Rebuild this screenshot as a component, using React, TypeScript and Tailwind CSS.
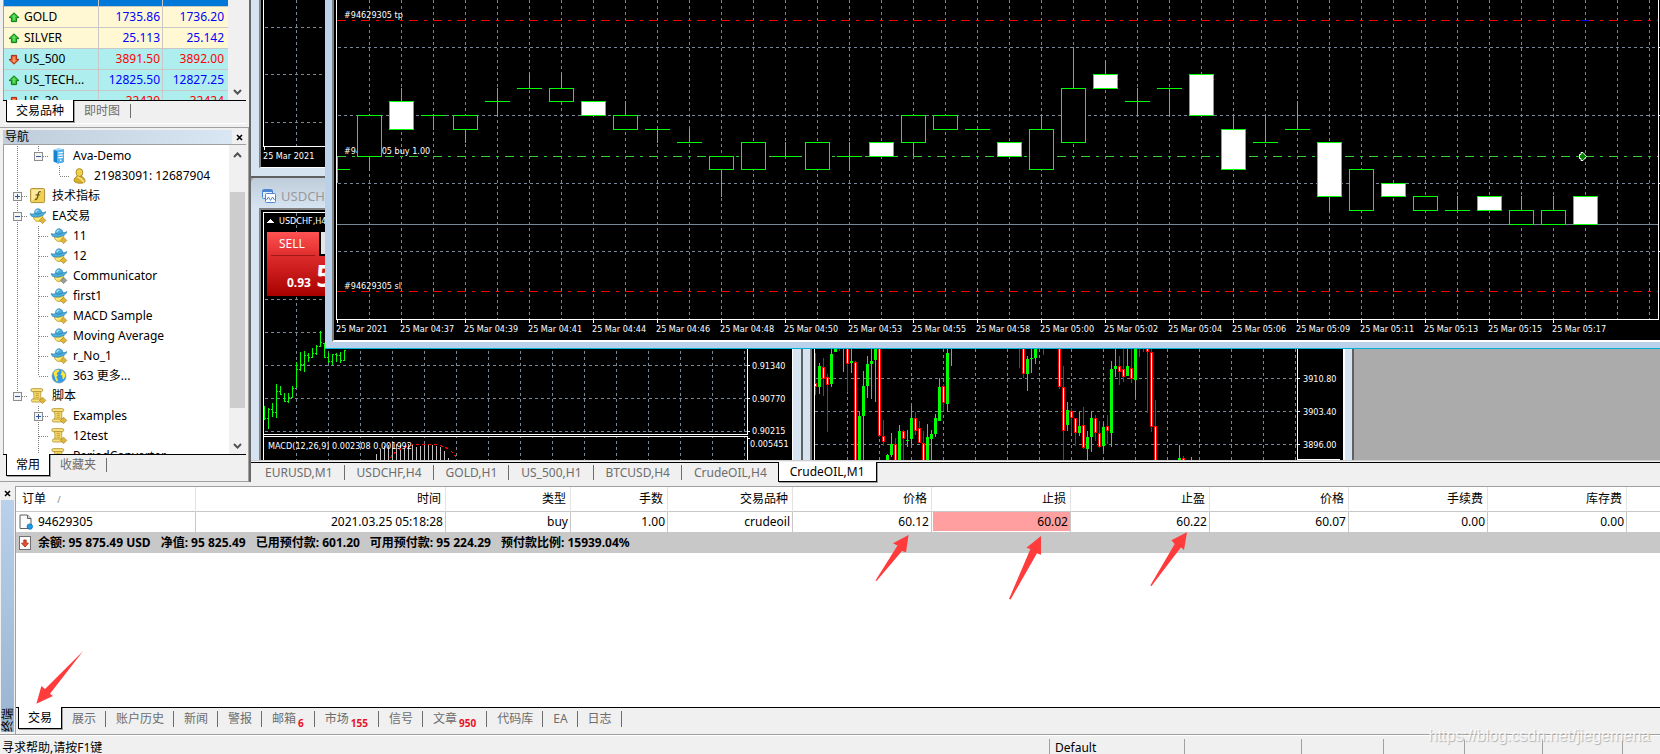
import React from 'react';

type Direction = 'up' | 'down';

const quotes: { symbol: string; bid: string; ask: string; dir: Direction; tone: string; color: string }[] = [
  { symbol: 'GOLD', bid: '1735.86', ask: '1736.20', dir: 'up', tone: 'bg-[#fff8d2]', color: 'text-[#0000ff]' },
  { symbol: 'SILVER', bid: '25.113', ask: '25.142', dir: 'up', tone: 'bg-[#fff8d2]', color: 'text-[#0000ff]' },
  { symbol: 'US_500', bid: '3891.50', ask: '3892.00', dir: 'down', tone: 'bg-[#afeeee]', color: 'text-[#ff0000]' },
  { symbol: 'US_TECH...', bid: '12825.50', ask: '12827.25', dir: 'up', tone: 'bg-[#afeeee]', color: 'text-[#0000ff]' },
  { symbol: 'US_30', bid: '32420', ask: '32424', dir: 'down', tone: 'bg-[#afeeee]', color: 'text-[#ff0000]' },
];

type Guide = 'line' | 'tee' | 'end' | 'blank' | 'open' | 'closed' | 'last-open';
type IconName = 'server' | 'user' | 'func' | 'robot' | 'robotGray' | 'globe' | 'script';

const tree: { label: string; icon: IconName; guides: Guide[] }[] = [
  { label: 'Ava-Demo', icon: 'server', guides: ['line', 'last-open'] },
  { label: '21983091: 12687904', icon: 'user', guides: ['line', 'blank', 'end'] },
  { label: '技术指标', icon: 'func', guides: ['closed'] },
  { label: 'EA交易', icon: 'robot', guides: ['open'] },
  { label: '11', icon: 'robot', guides: ['line', 'tee'] },
  { label: '12', icon: 'robot', guides: ['line', 'tee'] },
  { label: 'Communicator', icon: 'robotGray', guides: ['line', 'tee'] },
  { label: 'first1', icon: 'robot', guides: ['line', 'tee'] },
  { label: 'MACD Sample', icon: 'robot', guides: ['line', 'tee'] },
  { label: 'Moving Average', icon: 'robot', guides: ['line', 'tee'] },
  { label: 'r_No_1', icon: 'robot', guides: ['line', 'tee'] },
  { label: '363 更多...', icon: 'globe', guides: ['line', 'end'] },
  { label: '脚本', icon: 'script', guides: ['last-open'] },
  { label: 'Examples', icon: 'script', guides: ['blank', 'closed'] },
  { label: '12test', icon: 'script', guides: ['blank', 'tee'] },
  { label: 'PeriodConverter', icon: 'script', guides: ['blank', 'tee'] },
];

const chartTabs = ['EURUSD,M1', 'USDCHF,H4', 'GOLD,H1', 'US_500,H1', 'BTCUSD,H4', 'CrudeOIL,H4', 'CrudeOIL,M1'];

const terminalTabs: { label: string; badge?: string }[] = [
  { label: '交易' },
  { label: '展示' },
  { label: '账户历史' },
  { label: '新闻' },
  { label: '警报' },
  { label: '邮箱', badge: '6' },
  { label: '市场', badge: '155' },
  { label: '信号' },
  { label: '文章', badge: '950' },
  { label: '代码库' },
  { label: 'EA' },
  { label: '日志' },
];

const orderColumns = [
  { title: '时间', value: '2021.03.25 05:18:28', width: 'w-[250px]' },
  { title: '类型', value: 'buy', width: 'w-[125px]' },
  { title: '手数', value: '1.00', width: 'w-[97px]' },
  { title: '交易品种', value: 'crudeoil', width: 'w-[125px]' },
  { title: '价格', value: '60.12', width: 'w-[139px]' },
  { title: '止损', value: '60.02', width: 'w-[139px]', alert: true },
  { title: '止盈', value: '60.22', width: 'w-[139px]' },
  { title: '价格', value: '60.07', width: 'w-[139px]' },
  { title: '手续费', value: '0.00', width: 'w-[139px]' },
  { title: '库存费', value: '0.00', width: 'w-[139px]' },
];

// body top, body bottom, high, low, filled
type Candle = [number, number, number, number, boolean?];

const crudeCandles: Candle[] = [
  [115, 156, 115, 170],
  [101, 129, 88, 129, true],
  [115, 115, 115, 129],
  [115, 129, 115, 142],
  [101, 101, 88, 115],
  [88, 88, 74, 88],
  [88, 101, 74, 101],
  [101, 115, 101, 115, true],
  [115, 129, 101, 129],
  [129, 129, 129, 142],
  [142, 142, 129, 142],
  [156, 169, 156, 196],
  [142, 169, 142, 169],
  [156, 156, 142, 156],
  [142, 169, 142, 169],
  [156, 156, 142, 169],
  [142, 156, 142, 156, true],
  [115, 142, 115, 156],
  [115, 129, 115, 129],
  [129, 129, 129, 129],
  [142, 156, 142, 156, true],
  [129, 169, 115, 169],
  [88, 142, 47, 142],
  [74, 88, 61, 88, true],
  [101, 101, 88, 115],
  [88, 88, 88, 115],
  [74, 115, 74, 115, true],
  [129, 169, 115, 169, true],
  [142, 142, 115, 142],
  [129, 129, 101, 129],
  [142, 196, 142, 210, true],
  [169, 210, 169, 210],
  [183, 196, 183, 196, true],
  [196, 210, 196, 210],
  [210, 210, 196, 210],
  [196, 210, 196, 210, true],
  [210, 224, 196, 224],
  [210, 224, 196, 224],
  [196, 224, 196, 224, true],
];

const crudeTimes = [
  '25 Mar 2021', '25 Mar 04:37', '25 Mar 04:39', '25 Mar 04:41', '25 Mar 04:44', '25 Mar 04:46', '25 Mar 04:48',
  '25 Mar 04:50', '25 Mar 04:53', '25 Mar 04:55', '25 Mar 04:58', '25 Mar 05:00', '25 Mar 05:02', '25 Mar 05:04',
  '25 Mar 05:06', '25 Mar 05:09', '25 Mar 05:11', '25 Mar 05:13', '25 Mar 05:15', '25 Mar 05:17',
];

// slot, bullish, high, low, body top, body bottom
const us500Candles: [number, 0 | 1, number, number, number, number][] = [
  [0, 0, 353, 395, 383, 387], [1, 1, 363, 394, 366, 387], [2, 0, 358, 396, 367, 379], [3, 0, 374, 432, 377, 385],
  [4, 1, 345, 387, 354, 384], [5, 1, 345, 352, 345, 352], [6, 0, 345, 351, 345, 345], [7, 1, 345, 372, 345, 345],
  [8, 0, 345, 392, 345, 364], [9, 1, 345, 373, 361, 363], [10, 0, 361, 460, 362, 462], [11, 1, 412, 460, 416, 462],
  [12, 1, 371, 460, 386, 416], [13, 1, 356, 398, 364, 386], [14, 1, 345, 399, 361, 364], [15, 1, 345, 402, 345, 360],
  [16, 0, 345, 437, 345, 436], [17, 0, 420, 446, 436, 442], [18, 1, 454, 460, 455, 462], [19, 1, 433, 457, 444, 455],
  [20, 0, 438, 460, 444, 462], [21, 1, 425, 460, 431, 462], [22, 0, 430, 460, 431, 439], [23, 1, 430, 447, 440, 441],
  [24, 1, 406, 444, 418, 439], [25, 0, 412, 435, 418, 431], [26, 0, 421, 443, 428, 443], [27, 0, 431, 460, 443, 462],
  [28, 1, 424, 460, 437, 462], [29, 1, 430, 460, 434, 439], [30, 1, 414, 437, 418, 434], [31, 1, 378, 421, 387, 421],
  [32, 0, 384, 411, 386, 403], [33, 1, 345, 412, 353, 404], [34, 1, 345, 366, 345, 345], [51, 0, 345, 368, 345, 345],
  [52, 0, 345, 378, 345, 374], [53, 1, 356, 391, 359, 374], [54, 1, 345, 373, 358, 359], [55, 1, 345, 364, 345, 358],
  [57, 0, 345, 355, 345, 345], [61, 0, 345, 389, 345, 387], [62, 0, 366, 460, 387, 431], [63, 1, 402, 431, 410, 425],
  [64, 0, 408, 433, 411, 418], [65, 0, 418, 446, 418, 433], [66, 1, 411, 436, 426, 433], [67, 0, 407, 449, 425, 448],
  [68, 1, 431, 460, 437, 449], [69, 1, 411, 452, 418, 437], [70, 0, 415, 441, 418, 433], [71, 0, 421, 448, 433, 447],
  [72, 1, 423, 451, 427, 446], [73, 0, 415, 444, 426, 431], [74, 1, 361, 447, 369, 433], [75, 1, 345, 377, 366, 369],
  [76, 0, 356, 385, 366, 372], [77, 0, 345, 382, 369, 377], [78, 1, 345, 376, 366, 376], [79, 0, 345, 383, 368, 379],
  [80, 1, 345, 398, 345, 380], [81, 0, 345, 357, 345, 345], [82, 0, 345, 352, 345, 345], [83, 0, 345, 413, 345, 352],
  [84, 0, 345, 432, 352, 427], [85, 0, 400, 460, 426, 462], [91, 1, 445, 460, 458, 462], [92, 0, 456, 460, 458, 462],
  [94, 1, 457, 460, 460, 460],
];

// high, low, open, close
const usdchfBars: [number, number, number, number][] = [
  [406, 420, 418, 418], [408, 429, 418, 409], [403, 417, 409, 412], [384, 418, 412, 391], [386, 395, 391, 394],
  [393, 402, 398, 401], [393, 403, 401, 397], [386, 398, 397, 388], [362, 388, 388, 369], [352, 371, 369, 364],
  [351, 372, 364, 355], [353, 362, 355, 357], [348, 358, 357, 353], [345, 355, 353, 346], [331, 347, 346, 342],
  [343, 358, 343, 357], [353, 363, 357, 361], [354, 365, 361, 354], [353, 362, 354, 355], [352, 363, 355, 360],
  [350, 361, 360, 350],
];

const macdHeights = [6, 11, 14, 15, 16, 16, 15, 14, 16, 15, 13, 14, 15, 16, 15, 14, 13, 9, 2];

const QuoteArrow: React.FC<{ dir: Direction }> = ({ dir }) => (
  <svg viewBox="0 0 12 11" className={dir === 'up' ? 'h-[11px] w-3' : 'h-[11px] w-3 rotate-180'}>
    <path
      d="M6 0.8 L11 5.6 H8.6 V9.6 H3.4 V5.6 H1 Z"
      fill={dir === 'up' ? '#2fc12f' : '#f0602c'}
      stroke={dir === 'up' ? '#0d7a18' : '#a02a10'}
      strokeLinejoin="round"
    />
    <path d="M6 2.6 L8 4.8 H6.8 V8 H5.2 V4.8 H4 Z" fill={dir === 'up' ? '#6fdc6f' : '#ffa070'} />
  </svg>
);

const Diamond: React.FC<{ gray?: boolean }> = ({ gray }) => (
  <path d="M12.6 9.2 L15.8 12.4 L12.6 15.6 L9.4 12.4 Z" fill={gray ? '#9b9b9b' : '#dfb63a'} stroke={gray ? '#777777' : '#a8852a'} strokeWidth="0.7" />
);

const TreeIcon: React.FC<{ name: IconName }> = ({ name }) => (
  <svg viewBox="0 0 16 16" className="ml-[2px] h-4 w-4 shrink-0 overflow-visible">
    {name === 'server' && (
      <>
        <path d="M2.5 2 L7 0.5 L13 1.5 V14 L7 15.5 L2.5 13.5 Z" fill="#1583cf" />
        <path d="M6 2.6 L13 1.6 V14 L6 15.5 Z" fill="#4fb0ee" />
        <path d="M7.2 5 L11.8 4.3 M7.2 7.4 L11.8 6.8 M7.2 9.8 L11.8 9.3" stroke="#fff" strokeWidth="1.2" />
        <path d="M2.5 2 L7 0.3 L13 1.3 L6 2.8 Z" fill="#a6dcfa" />
        <circle cx="9.6" cy="12.4" r="0.8" fill="#fff" />
      </>
    )}
    {name === 'user' && (
      <>
        <path d="M2 13 C2 9.5 4.5 8 6.5 8 C10.5 8 13.2 10 13 14 C10 16 4 15.6 2 13 Z" fill="#d9b02a" stroke="#9c7a14" strokeWidth="0.8" />
        <ellipse cx="7.4" cy="4.6" rx="3.4" ry="4" fill="#efd24c" stroke="#9c7a14" strokeWidth="0.8" />
        <path d="M5.4 8.6 L9 11 L12.2 14.2" fill="none" stroke="#fae98e" strokeWidth="1.4" />
      </>
    )}
    {name === 'func' && (
      <>
        <rect x="0.6" y="0.6" width="14" height="14" rx="1.2" fill="#f0cf55" stroke="#b08f34" />
        <path d="M1.5 1.5 H13.6 L1.5 13.6 Z" fill="#fae99a" />
        <path d="M10.8 3.8 C9 3 8.4 4.5 8 7 C7.5 10 7 12 5 11.4 M5.6 6.8 H9.6" fill="none" stroke="#6b5212" strokeWidth="1.3" />
      </>
    )}
    {(name === 'robot' || name === 'robotGray') && (
      <>
        <path d="M3.2 7.5 C3.2 11.5 5.6 13.6 8.2 13.6 C11 13.6 12.8 11 12.8 7.5 Z" fill="#f6dc50" stroke="#b3942a" strokeWidth="0.7" />
        <path d="M0.3 5.6 C0 9 5.4 9.6 9 8.8 C12.4 8 15.6 6 15.7 3.6 C14.4 4.6 12.8 4.8 11.9 4.5 C11.2 1.6 9.4 0.6 7.6 0.8 C5.4 1 4.5 2.8 4.6 5.4 C3 6.2 1.4 6.2 0.3 5.6 Z" fill="#4aaede" stroke="#2a7dab" strokeWidth="0.7" />
        <path d="M4.6 5.4 C6.4 6.6 10.4 6.2 11.9 4.5" fill="none" stroke="#2a7dab" strokeWidth="0.8" />
        <path d="M5.9 4.2 C6 2.6 7 2 8.4 2" fill="none" stroke="#b5e4fa" strokeWidth="1.2" />
        <path d="M4.8 10.6 C7 11.4 9 11 10 10.2" fill="none" stroke="#fff3a8" />
        <Diamond gray={name === 'robotGray'} />
      </>
    )}
    {name === 'globe' && (
      <>
        <circle cx="8" cy="8" r="7" fill="#2f9be6" stroke="#7f9fb8" strokeWidth="0.8" />
        <path d="M2.4 5 C3.6 2.6 6 1.6 8.4 1.8 L7.6 4 L5.6 5 L6.8 7.4 L5.4 9 L7 12.2 L6.2 13.8 C4.6 12.6 4 10 3.6 8.4 Z" fill="#ffe536" />
        <path d="M10 2.4 C12.4 3 14.4 5.4 14.4 7.8 L12.6 11.6 L11.2 10 L11.4 7.8 L9.4 6.6 L10.8 4.6 Z" fill="#ffe536" />
      </>
    )}
    {name === 'script' && (
      <>
        <path d="M2.8 3.4 H11 C10.6 6 10.6 9 11.2 11.6 H3.4 C4.2 9 4.2 6 3 3.4 Z" fill="#f4d764" stroke="#b08f34" strokeWidth="0.8" />
        <rect x="0.8" y="0.6" width="12" height="3" rx="1.5" fill="#f8e07a" stroke="#b08f34" strokeWidth="0.8" />
        <rect x="1.4" y="11" width="11" height="3" rx="1.5" fill="#f8e07a" stroke="#b08f34" strokeWidth="0.8" />
        <path d="M5.6 5.6 H9 M5.8 7.4 H9 M5.6 9.2 H9" stroke="#b9962e" strokeWidth="0.7" />
        <Diamond />
      </>
    )}
  </svg>
);

const GuideCell: React.FC<{ kind: Guide }> = ({ kind }) => {
  const box = kind === 'open' || kind === 'closed' || kind === 'last-open';
  const toBottom = kind === 'line' || kind === 'tee' || kind === 'open' || kind === 'closed';
  return (
    <svg viewBox="0 0 21 20" className="h-5 w-[21px] shrink-0" shapeRendering="crispEdges">
      {kind !== 'blank' && (
        <path d={toBottom ? 'M10.5 0 V20' : 'M10.5 0 V10'} stroke="#808080" strokeDasharray="1 1" />
      )}
      {kind !== 'blank' && kind !== 'line' && <path d="M11 10.5 H21" stroke="#808080" strokeDasharray="1 1" />}
      {box && (
        <>
          <rect x="6.5" y="6.5" width="8" height="8" fill="#f4f4f4" stroke="#8c8c8c" />
          <path d={kind === 'closed' ? 'M8 10.5 H13 M10.5 8 V13' : 'M8 10.5 H13'} stroke="#31549c" />
        </>
      )}
    </svg>
  );
};

const Chevron: React.FC<{ up?: boolean }> = ({ up }) => (
  <svg viewBox="0 0 9 6" className="h-[6px] w-[9px]">
    <path d={up ? 'M1 5 L4.5 1.4 L8 5' : 'M1 1 L4.5 4.6 L8 1'} fill="none" stroke="#505050" strokeWidth="2" />
  </svg>
);

const CloseX = () => (
  <svg viewBox="0 0 7 7" className="h-[7px] w-[7px]">
    <path d="M1 1 L6 6 M6 1 L1 6" stroke="#000" strokeWidth="1.6" />
  </svg>
);

const PanelTabs: React.FC<{ active: string; other: string }> = ({ active, other }) => (
  <div role="tablist" className="flex h-[21px] border-t border-black bg-[#f0f0f0] pl-[3px] leading-5">
    <button role="tab" aria-selected="true" className="-mt-px h-[22px] border border-t-0 border-black bg-white px-[9px] shadow-[1px_1px_0_#a0a0a0]">
      {active}
    </button>
    <button role="tab" aria-selected="false" className="my-[3px] flex items-center border-r border-[#6d6d6d] px-[10px] text-[#6d6d6d]">
      {other}
    </button>
  </div>
);

const MarketWatch = () => (
  <section className="h-[128px] border-b border-[#a0a0a0] pl-[3px] pr-[3px]">
    <div className="border-b border-white pb-[2px]">
      <div className="flex h-[100px] overflow-hidden border-l border-[#a0a0a0] bg-white">
        <table className="w-[224px] table-fixed border-separate border-spacing-0 self-start">
          <tbody>
            <tr className="bg-[#0078d7]">
              <td className="h-[7px] w-[95px] border-b border-r border-[#c8c8c8] p-0"></td>
              <td className="w-16 border-b border-r border-[#c8c8c8] p-0"></td>
              <td className="border-b border-[#c8c8c8] p-0"></td>
            </tr>
            {quotes.map((q) => (
              <tr key={q.symbol} className={q.tone}>
                <td className="h-[21px] border-b border-r border-[#c8c8c8] p-0 pl-1">
                  <div className="flex items-center gap-1">
                    <QuoteArrow dir={q.dir} />
                    <span className="leading-5">{q.symbol}</span>
                  </div>
                </td>
                <td className={`border-b border-r border-[#c8c8c8] p-0 pr-[2px] text-right leading-5 ${q.color}`}>{q.bid}</td>
                <td className={`border-b border-[#c8c8c8] p-0 pr-1 text-right leading-5 ${q.color}`}>{q.ask}</td>
              </tr>
            ))}
          </tbody>
        </table>
        <div className="flex flex-1 flex-col items-center justify-end bg-[#f0f0f0] pb-[5px]">
          <Chevron />
        </div>
      </div>
      <PanelTabs active="交易品种" other="即时图" />
    </div>
  </section>
);

const Navigator = () => (
  <section className="h-[354px] border-b border-r border-[#a0a0a0] pl-[3px] pr-[2px] pt-[2px]">
    <header className="flex h-[14px] items-center justify-between">
      <h2 className="h-[14px] flex-1 bg-linear-to-r from-[#bfcddb] to-[#d9e6f4] pl-[2px] leading-[14px]">导航</h2>
      <button aria-label="关闭" className="flex h-[14px] w-[14px] items-center justify-center">
        <CloseX />
      </button>
    </header>
    <div className="flex h-[310px] overflow-hidden border-l border-t border-[#a0a0a0] bg-white">
      <ul className="flex-1 overflow-hidden pl-[3px] pt-px">
        {tree.map((node) => (
          <li key={node.label} className="flex h-5 items-center">
            {node.guides.map((g, i) => (
              <GuideCell key={i} kind={g} />
            ))}
            <TreeIcon name={node.icon} />
            <span className="pl-[6px] leading-5 whitespace-nowrap">{node.label}</span>
          </li>
        ))}
      </ul>
      <div className="flex w-[17px] flex-col items-center bg-[#f0f0f0] pb-[5px] pt-[7px]">
        <Chevron up />
        <div className="mt-[34px] mb-auto h-[216px] w-[15px] bg-[#cdcdcd]"></div>
        <Chevron />
      </div>
    </div>
    <PanelTabs active="常用" other="收藏夹" />
  </section>
);

const Us500Chart = () => (
  <svg viewBox="812 340 531 120" className="h-[120px] w-[531px] bg-black font-['DejaVu_Sans_Condensed','DejaVu_Sans',sans-serif] text-[9px]" shapeRendering="crispEdges">
    <g stroke="#778899" strokeDasharray="3 3">
      {Array.from({ length: 15 }, (_, i) => (
        <path key={i} d={`M${847.5 + i * 32} 343 V460`} />
      ))}
      <path d="M815 378.5 H1297 M815 411.5 H1297 M815 444.5 H1297" />
    </g>
    {us500Candles.map(([slot, up, high, low, top, bottom]) => {
      const x = 815 + slot * 4;
      const color = up ? '#00ff00' : '#ff0000';
      return (
        <g key={slot}>
          <path d={`M${x + 0.5} ${high} V${low}`} stroke={color} />
          {bottom > top && <rect x={x - 1} y={top} width="3" height={bottom - top} fill={color} />}
          {!up && bottom - top > 2 && <rect x={x} y={top + 1} width="1" height={bottom - top - 2} fill="#fff" />}
        </g>
      );
    })}
    <path d="M814.5 340 V460 M1297.5 340 V460 M1298 378.5 H1300 M1298 411.5 H1300 M1298 444.5 H1300 M1298 459.5 H1340" stroke="#fff" />
    <g fill="#fff">
      <text x="1303" y="382">3910.80</text>
      <text x="1303" y="415">3903.40</text>
      <text x="1303" y="448">3896.00</text>
    </g>
  </svg>
);

const EurusdChart = () => (
  <svg viewBox="261 0 80 167" className="h-[167px] w-20 bg-black font-['DejaVu_Sans_Condensed','DejaVu_Sans',sans-serif] text-[9px]" shapeRendering="crispEdges">
    <path d="M296.5 0 V146 M265 27.5 H341 M265 74.5 H341 M265 122.5 H341" stroke="#778899" strokeDasharray="3 3" />
    <path d="M263.5 0 V146.5 H341 M264.5 147 V150" stroke="#fff" fill="none" />
    <text x="263" y="159" fill="#fff">25 Mar 2021</text>
  </svg>
);

const UsdchfChart = () => (
  <svg viewBox="261 210 531 250" className="h-[250px] w-[531px] bg-black font-['DejaVu_Sans_Condensed','DejaVu_Sans',sans-serif] text-[9px]" shapeRendering="crispEdges">
    <defs>
      <linearGradient id="sell" x1="0" y1="0" x2="0" y2="1">
        <stop offset="0" stopColor="#ff5252" />
        <stop offset="0.4" stopColor="#dc2a2a" />
        <stop offset="1" stopColor="#a80000" />
      </linearGradient>
    </defs>
    <g stroke="#778899" strokeDasharray="3 3">
      {Array.from({ length: 15 }, (_, i) => (
        <path key={i} d={`M${296.5 + i * 32} 213 V460`} />
      ))}
      <path d="M265 299.5 H747 M265 332.5 H747 M265 365.5 H747 M265 398.5 H747 M265 431.5 H747" />
    </g>
    <g stroke="#00ff00">
      {usdchfBars.map(([high, low, open, close], i) => {
        const x = 264 + i * 4;
        return <path key={i} d={`M${x + 0.5} ${high} V${low} M${x - 1} ${open + 0.5} H${x} M${x + 1} ${close + 0.5} H${x + 2}`} />;
      })}
    </g>
    <g fill="#c0c0c0">
      {macdHeights.map((h, i) => (
        <rect key={i} x={376 + i * 4} y={460 - h} width="1" height={h} />
      ))}
    </g>
    <path d="M390 458 C396 450 406 444 424 444 C446 444 452 450 458 460" fill="none" stroke="#ff0000" strokeDasharray="3 3" />
    <rect x="263" y="434" width="485" height="3" fill="#000" />
    <path d="M263.5 460 V212.5 H747.5 V434.5 H263.5 M264 436.5 H747.5 V460 M748 365.5 H750 M748 398.5 H750 M748 431.5 H750 M748 438.5 H750" stroke="#fff" fill="none" />
    <g fill="#fff">
      <text x="752" y="369">0.91340</text>
      <text x="752" y="402">0.90770</text>
      <text x="752" y="434">0.90215</text>
      <text x="750" y="447">0.005451</text>
      <text x="268" y="449">MACD(12,26,9) 0.002308 0.001992</text>
      <path d="M267 223 L270.5 219 L274 223 Z" />
      <text x="279" y="224">USDCHF,H4</text>
    </g>
    <path d="M267 232 H319 V256 H345 V296 H267 Z" fill="url(#sell)" />
    <path d="M321 232 H345 V254 H321 Z" fill="#e6e6e6" />
    <path d="M271 255.5 H315" stroke="#a01818" />
    <text x="279" y="248" fill="#fff" className="font-['Noto_Sans',sans-serif] text-[12px]">SELL</text>
    <text x="287" y="287" fill="#fff" className="font-['Noto_Sans',sans-serif] text-[12px] font-bold">0.93</text>
    <text x="316" y="287" fill="#fff" className="font-['Noto_Sans',sans-serif] text-[30px] font-semibold">5</text>
  </svg>
);

const CrudeChart = () => (
  <svg viewBox="334 0 1326 340" className="h-[340px] w-[1326px] shrink-0 bg-black font-['DejaVu_Sans_Condensed','DejaVu_Sans',sans-serif] text-[9px]" shapeRendering="crispEdges">
    <g stroke="#778899">
      {Array.from({ length: 41 }, (_, i) => (
        <path key={i} d={`M${369.5 + i * 32} 0 V319`} strokeDasharray="3 3" />
      ))}
      <path d="M338 47.5 H1656 M338 115.5 H1656 M338 183.5 H1656 M338 251.5 H1656" strokeDasharray="3 3" />
      <path d="M337 224.5 H1658" />
    </g>
    <g strokeDasharray="9 6 3 6">
      <path d="M337 20.5 H1658 M337 291.5 H1658" stroke="#ff0000" />
      <path d="M337 156.5 H1658" stroke="#32cd32" />
    </g>
    <path d="M1582 20.5 H1589" stroke="#0000ff" />
    <g fill="#fff">
      <text x="344" y="18">#94629305 tp</text>
      <text x="344" y="154">#94629305 buy 1.00</text>
      <text x="344" y="289">#94629305 sl</text>
    </g>
    <path d="M337.5 156 V183 M337 169.5 H350" stroke="#00ff00" />
    {crudeCandles.map(([top, bottom, high, low, filled], i) => {
      const x = 369 + i * 32;
      return (
        <g key={i} stroke="#00ff00">
          <path d={`M${x + 0.5} ${high} V${low + 1}`} />
          {top === bottom ? (
            <path d={`M${x - 12} ${top + 0.5} H${x + 13}`} />
          ) : (
            <rect x={x - 11.5} y={top + 0.5} width="24" height={bottom - top} fill={filled ? '#fff' : '#000'} />
          )}
        </g>
      );
    })}
    <path d="M1579.5 154.5 H1581 V152.5 H1583 L1586.5 156.5 L1583 160.5 H1581 V158.5 H1579.5 Z" fill="#008000" stroke="#fff" shapeRendering="auto" />
    <path d="M336.5 0 V319.5 H1658.5 V0 M1659 47.5 H1660 M1659 115.5 H1660 M1659 183.5 H1660 M1659 251.5 H1660" stroke="#fff" fill="none" />
    {crudeTimes.map((time, i) => (
      <g key={time}>
        <path d={`M${337.5 + i * 64} 320 V323`} stroke="#fff" />
        <text x={336 + i * 64} y="332" fill="#fff">{time}</text>
      </g>
    ))}
  </svg>
);

const ChartDesktop = () => (
  <div className="relative h-[460px] overflow-hidden bg-[#ababab]">
    {/* US_500 */}
    <div className="absolute bottom-0 left-[552px] flex h-[120px] w-[551px] border-r-2 border-[#606060] bg-[#d6e4f2] pl-[7px]">
      <div className="border-l-2 border-r-2 border-l-[#808080] border-r-white">
        <Us500Chart />
      </div>
    </div>

    {/* EURUSD */}
    <div className="absolute left-0 top-0 h-[178px] w-[550px] border-b-2 border-[#606060] bg-[#d6e4f2] pl-[8px]">
      <div className="w-fit border-b border-l-2 border-b-white border-l-[#808080]">
        <EurusdChart />
      </div>
    </div>

    {/* USDCHF */}
    <div className="absolute left-0 top-[178px] h-[282px] w-[552px] rounded-tl-md border-r-2 border-[#606060] bg-[#d6e4f2] pl-[8px]">
      <div className="-ml-[8px] flex h-[30px] items-center gap-[5px] rounded-tl-md bg-linear-to-b from-[#bfcddb] to-[#d6e4f2] pl-[11px] pt-[6px]">
        <svg viewBox="0 0 14 14" className="h-[14px] w-[14px]">
          <rect x="0.5" y="0.5" width="10" height="9" rx="1" fill="#e8f1fb" stroke="#4a86d0" />
          <path d="M1 2 H10" stroke="#4a86d0" strokeWidth="2" />
          <rect x="3.5" y="4.5" width="10" height="9" rx="1" fill="#fff" stroke="#4a86d0" />
          <path d="M4.5 11 L6.5 8 L8.5 11.5 L10.5 8 L12.5 11" fill="none" stroke="#4a86d0" />
        </svg>
        <span className="text-[13px] leading-4 text-[#999999]">USDCHF,H4</span>
      </div>
      <div className="w-fit border-l-2 border-r border-t-2 border-l-[#808080] border-r-white border-t-[#808080]">
        <UsdchfChart />
      </div>
    </div>

    {/* CrudeOIL, in front */}
    <div className="absolute left-[74px] right-0 top-0 h-[349px] overflow-hidden border-b border-[#00b4d8] bg-[#b9d1ea] pl-[7px]">
      <div className="flex overflow-hidden border-b-2 border-l-2 border-b-white border-l-[#808080]">
        <CrudeChart />
      </div>
    </div>
  </div>
);

const ChartTabs = () => (
  <div className="border-t border-[#d0d0d0] pt-px">
    <div role="tablist" className="flex h-5 border-t border-black pl-[2px] leading-5">
      {chartTabs.map((tab, i) =>
        i === chartTabs.length - 1 ? (
          <button key={tab} role="tab" aria-selected="true" className="-mt-px border border-t-0 border-black bg-white px-[11px] shadow-[1px_1px_0_#a0a0a0]">
            {tab}
          </button>
        ) : (
          <button
            key={tab}
            role="tab"
            aria-selected="false"
            className={`my-[2px] flex items-center pl-3 pr-[11px] text-[#6d6d6d] ${i < chartTabs.length - 2 ? 'border-r border-[#6d6d6d]' : ''}`}
          >
            {tab}
          </button>
        )
      )}
    </div>
  </div>
);

const Terminal = () => (
  <section className="relative flex flex-1 border-b border-[#a0a0a0] pt-[4px]">
    <div className="flex w-[15px] flex-col items-center pb-[2px]">
      <button aria-label="关闭" className="flex h-[14px] w-[14px] items-center justify-center">
        <CloseX />
      </button>
      <div className="flex w-[13px] flex-1 items-end justify-center bg-linear-to-b from-[#b9d1ea] to-[#99b4d1]">
        <span className="rotate-180 leading-[13px] [text-orientation:sideways] [writing-mode:vertical-rl]">终端</span>
      </div>
    </div>

    <div className="flex min-w-0 flex-1 flex-col border-l border-t border-[#a0a0a0]">
      <div className="flex-1 overflow-hidden bg-white">
        <table className="w-full table-fixed border-separate border-spacing-0">
          <thead>
            <tr>
              <th className="h-[25px] w-[180px] border-b border-r border-b-[#c8c8c8] border-r-[#e3e3e3] p-0 pl-[6px] text-left font-normal">
                订单 <span className="pl-2 text-[9px] text-[#808080]">/</span>
              </th>
              {orderColumns.map((col, i) => (
                <th key={i} className={`${col.width} border-b border-r border-b-[#c8c8c8] border-r-[#e3e3e3] p-0 pr-1 text-right font-normal`}>
                  {col.title}
                </th>
              ))}
              <th className="border-b border-[#c8c8c8]"></th>
            </tr>
          </thead>
          <tbody>
            <tr>
              <td className="h-5 border-r border-[#c8c8c8] p-0 pl-[3px]">
                <div className="flex items-center gap-[5px]">
                  <svg viewBox="0 0 14 16" className="h-4 w-[14px]">
                    <path d="M1 1 H8.5 L12 4.5 V14.5 H1 Z" fill="#fbfbfb" stroke="#606060" />
                    <path d="M8.5 1 V4.5 H12" fill="#d8d8d8" stroke="#606060" />
                    <circle cx="10.8" cy="12.6" r="2.7" fill="#1c9be6" stroke="#0b6bac" strokeWidth="0.8" />
                  </svg>
                  <span className="leading-5">94629305</span>
                </div>
              </td>
              {orderColumns.map((col, i) => (
                <td
                  key={i}
                  className={`border-r border-[#c8c8c8] p-0 pr-[2px] text-right leading-5 ${col.alert ? 'bg-[#ff9f9f] shadow-[inset_1px_-1px_0_#fff]' : ''}`}
                >
                  {col.value}
                </td>
              ))}
              <td></td>
            </tr>
            <tr className="bg-[#c8c8c8] font-bold">
              <td colSpan={12} className="h-[21px] p-0 pl-[3px]">
                <div className="flex items-center gap-[7px]">
                  <svg viewBox="0 0 12 14" className="h-[14px] w-3">
                    <rect x="0.5" y="0.5" width="11" height="13" fill="#fafafa" stroke="#707070" />
                    <path d="M6 11 L2.6 7.2 H4.8 V4 H7.2 V7.2 H9.4 Z" fill="#f0502c" stroke="#a02a10" strokeWidth="0.8" />
                  </svg>
                  <div className="flex gap-[10px] leading-5 whitespace-nowrap">
                    <span>余额: 95 875.49 USD</span>
                    <span>净值: 95 825.49</span>
                    <span>已用预付款: 601.20</span>
                    <span>可用预付款: 95 224.29</span>
                    <span>预付款比例: 15939.04%</span>
                  </div>
                </div>
              </td>
            </tr>
          </tbody>
        </table>
      </div>
      <div role="tablist" className="flex h-[27px] items-start border-t border-black pl-[2px] leading-5">
        {terminalTabs.map((tab, i) =>
          i === 0 ? (
            <button key={tab.label} role="tab" aria-selected="true" className="-mt-px h-[22px] border border-t-0 border-black bg-white px-[9px] shadow-[1px_1px_0_#a0a0a0]">
              {tab.label}
            </button>
          ) : (
            <button key={tab.label} role="tab" aria-selected="false" className="mt-[3px] flex h-4 items-center border-r border-[#6d6d6d] pl-[10px] pr-[9px] text-[#6d6d6d]">
              {tab.label}
              {tab.badge && <span className="pl-[2px] pr-[1px] pt-2 text-[10px] font-bold text-[#e81123]">{tab.badge}</span>}
            </button>
          )
        )}
      </div>
    </div>

    {/* Hand-drawn pointers over the order row and the first tab */}
    <svg viewBox="0 482 1200 253" className="pointer-events-none absolute left-0 top-0 h-[253px] w-[1200px]" fill="#ff3b3b">
      <path d="M908.6 535 L893 543.3 L897.5 545.5 L875.5 580.5 L876.5 581 L902 551 L906 552.3 Z" />
      <path d="M1041 536 L1026.4 547.7 L1030.4 549 L1009 599 L1010.5 599.6 L1037 553.3 L1041 554.7 Z" />
      <path d="M1187 532.3 L1171.4 540.3 L1174.7 544 L1150.3 585.5 L1151.5 586 L1181 547.3 L1184 550 Z" />
      <path d="M36.4 703.7 L41.4 686 L45 689 L83.2 651 L50 693.7 L52.9 696 Z" />
    </svg>
  </section>
);

const StatusBar = () => (
  <footer className="flex h-[19px] border-t border-white pt-[3px] leading-[18px] whitespace-nowrap">
    <span className="w-[1049px] shrink-0 pl-[2px]">寻求帮助,请按F1键</span>
    <span className="w-[135px] shrink-0 border-l border-[#a0a0a0] pl-[5px]">Default</span>
    <span className="w-[117px] shrink-0 border-l border-[#a0a0a0]"></span>
    <span className="w-[82px] shrink-0 border-l border-[#a0a0a0]"></span>
    <span className="w-[81px] shrink-0 border-l border-[#a0a0a0]"></span>
    <span className="w-[78px] shrink-0 border-l border-[#a0a0a0]"></span>
    <span className="w-[80px] shrink-0 border-l border-[#a0a0a0]"></span>
    <span className="flex-1 border-l border-[#a0a0a0]"></span>
  </footer>
);

const App: React.FC = () => {
  return (
    <main className="relative flex min-h-screen flex-col overflow-hidden bg-[#f0f0f0] font-['Noto_Sans','Noto_Sans_CJK_SC',sans-serif] text-[12px] leading-4 text-black">
      <div className="flex">
        <aside className="w-[249px] shrink-0">
          <MarketWatch />
          <Navigator />
        </aside>
        <div className="min-w-0 flex-1 border-l-2 border-[#696969]">
          <ChartDesktop />
          <ChartTabs />
        </div>
      </div>
      <Terminal />
      <StatusBar />
      <p className="pointer-events-none absolute bottom-[8px] right-[10px] font-['Liberation_Sans',sans-serif] text-[16px] leading-5 text-white/80 [text-shadow:1px_1px_1px_#b0b0b0]">
        https://blog.csdn.net/jiegemena
      </p>
    </main>
  );
};

export default App;
